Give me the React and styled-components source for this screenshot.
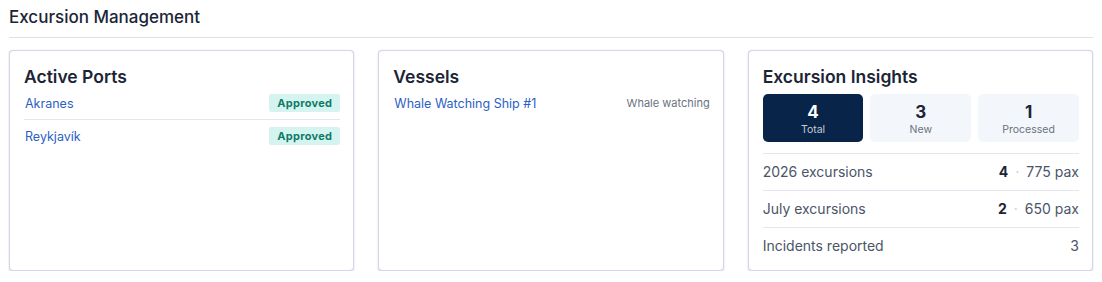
import React from "react";
import styled, { createGlobalStyle } from "styled-components";

const GlobalStyle = createGlobalStyle`
  body {
    margin: 0;
    background: #ffffff;
    font-family: Inter, "Noto Sans", "Liberation Sans", sans-serif;
    color: #1b2536;
  }
`;

const ports = [
  { name: "Akranes", status: "Approved" },
  { name: "Reykjavík", status: "Approved" },
];

const vessels = [{ name: "Whale Watching Ship #1", type: "Whale watching" }];

const stats = [
  { value: 4, label: "Total", active: true },
  { value: 3, label: "New" },
  { value: 1, label: "Processed" },
];

const insights = [
  { label: "2026 excursions", count: 4, pax: "775 pax" },
  { label: "July excursions", count: 2, pax: "650 pax" },
  { label: "Incidents reported", plain: "3" },
];

function App() {
  return (
    <Page>
      <GlobalStyle />
      <Heading>Excursion Management</Heading>
      <Cards>
        <Card>
          <CardTitle>Active Ports</CardTitle>
          <List>
            {ports.map((p) => (
              <Row key={p.name}>
                <Link href="#">{p.name}</Link>
                <Badge>{p.status}</Badge>
              </Row>
            ))}
          </List>
        </Card>

        <Card>
          <CardTitle>Vessels</CardTitle>
          <List>
            {vessels.map((v) => (
              <Row key={v.name} $plain>
                <Link href="#">{v.name}</Link>
                <Muted>{v.type}</Muted>
              </Row>
            ))}
          </List>
        </Card>

        <Card>
          <CardTitle>Excursion Insights</CardTitle>
          <Tiles>
            {stats.map((s) => (
              <Tile key={s.label} $active={s.active}>
                <TileValue>{s.value}</TileValue>
                <TileLabel>{s.label}</TileLabel>
              </Tile>
            ))}
          </Tiles>
          <StatList>
            {insights.map((i) => (
              <StatRow key={i.label}>
                <span>{i.label}</span>
                {i.plain ? (
                  <StatValue>{i.plain}</StatValue>
                ) : (
                  <StatValue>
                    <strong>{i.count}</strong>
                    <Dot>·</Dot>
                    {i.pax}
                  </StatValue>
                )}
              </StatRow>
            ))}
          </StatList>
        </Card>
      </Cards>
    </Page>
  );
}

export default App;

const Page = styled.div`
  padding: 7px 9px 0;
`;

const Heading = styled.h2`
  margin: 0;
  font-size: 17px;
  line-height: 20px;
  font-weight: 500;
  color: #1b2536;
  padding-bottom: 10px;
  border-bottom: 1px solid #dde1e8;
`;

const Cards = styled.div`
  display: grid;
  grid-template-columns: repeat(3, 1fr);
  gap: 24px;
  margin-top: 12px;
`;

const Card = styled.section`
  height: 221px;
  box-sizing: border-box;
  border: 1px solid #d4d8e6;
  border-radius: 4px;
  box-shadow: 0 1px 2px rgba(40, 50, 100, 0.14), 0 0 1px rgba(40, 50, 100, 0.18);
  padding: 15px 13px 0 14px;
  background: #fff;
`;

const CardTitle = styled.h3`
  margin: 0;
  font-size: 17.5px;
  line-height: 21px;
  font-weight: 600;
  color: #1b2536;
`;

const List = styled.div`
  display: flex;
  flex-direction: column;
`;

const Row = styled.div`
  display: flex;
  align-items: center;
  justify-content: space-between;
  padding: 7px 0;
  min-height: 18px;
  border-bottom: 1px solid ${({ $plain }) => ($plain ? "transparent" : "#e3e6ee")};

  &:last-child {
    border-bottom: none;
  }
`;

const Link = styled.a`
  font-size: 12.5px;
  color: #2c5fc6;
  text-decoration: none;
  padding-left: 1px;
`;

const Badge = styled.span`
  display: inline-flex;
  align-items: center;
  height: 18px;
  padding: 0 8px;
  border-radius: 2px;
  background: #d6f4ef;
  color: #0f7a6a;
  font-size: 11px;
  font-weight: 700;
  letter-spacing: 0.3px;
`;

const Muted = styled.span`
  font-size: 11px;
  color: #6b7280;
`;

const Tiles = styled.div`
  display: grid;
  grid-template-columns: repeat(3, 1fr);
  gap: 7px;
  margin-top: 7px;
`;

const Tile = styled.div`
  display: flex;
  flex-direction: column;
  align-items: center;
  padding: 8px 0 5px;
  border-radius: 5px;
  background: ${({ $active }) => ($active ? "#082448" : "#f3f6fa")};
  color: ${({ $active }) => ($active ? "#ffffff" : "#1b2536")};

  span {
    color: ${({ $active }) => ($active ? "#c3cad6" : "#6b7280")};
  }
`;

const TileValue = styled.div`
  font-size: 17px;
  line-height: 20px;
  font-weight: 700;
`;

const TileLabel = styled.span`
  font-size: 10.5px;
  line-height: 14px;
  margin-top: 1px;
`;

const StatList = styled.div`
  margin-top: 11px;
  border-top: 1px solid #e3e6ee;
`;

const StatRow = styled.div`
  display: flex;
  justify-content: space-between;
  align-items: center;
  padding: 9px 0;
  line-height: 18px;
  font-size: 14px;
  color: #4b5567;
  border-bottom: 1px solid #e3e6ee;

  &:last-child {
    border-bottom: none;
  }
`;

const StatValue = styled.span`
  color: #4b5567;

  strong {
    color: #1b2536;
    font-weight: 700;
  }
`;

const Dot = styled.span`
  color: #c4c9d2;
  margin: 0 7px;
`;
